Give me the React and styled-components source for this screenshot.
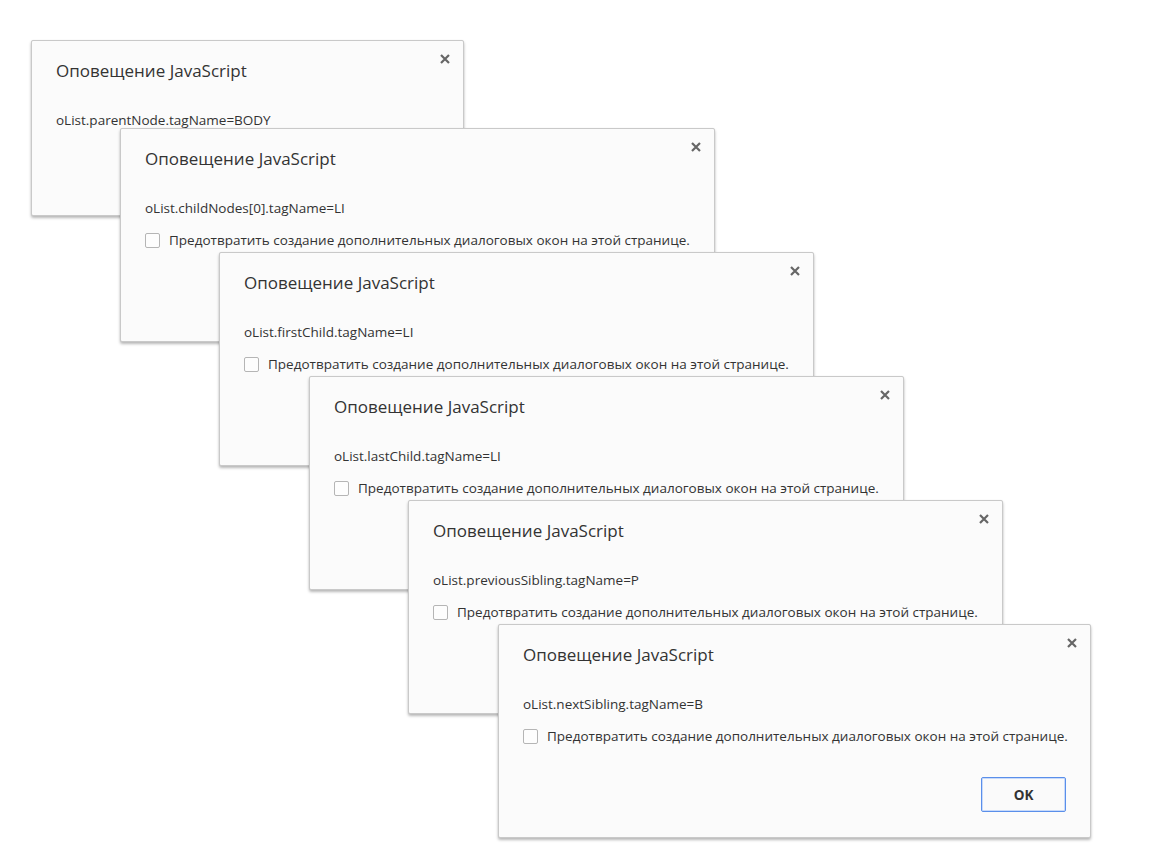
import styled, { createGlobalStyle } from 'styled-components';

const GlobalStyle = createGlobalStyle`
  html, body {
    margin: 0;
    padding: 0;
    background: #ffffff;
  }
  body {
    font-family: "Open Sans", "Noto Sans", "Liberation Sans", sans-serif;
  }
`;

const PREVENT_TEXT =
  'Предотвратить создание дополнительных диалоговых окон на этой странице.';

const alerts = [
  { x: 31, y: 40, width: 433, message: 'oList.parentNode.tagName=BODY', prevent: false },
  { x: 120, y: 128, width: 595, message: 'oList.childNodes[0].tagName=LI', prevent: true },
  { x: 219, y: 252, width: 595, message: 'oList.firstChild.tagName=LI', prevent: true },
  { x: 309, y: 376, width: 595, message: 'oList.lastChild.tagName=LI', prevent: true },
  { x: 408, y: 500, width: 595, message: 'oList.previousSibling.tagName=P', prevent: true },
  { x: 498, y: 624, width: 593, message: 'oList.nextSibling.tagName=B', prevent: true },
];

const Desktop = styled.div`
  position: relative;
  width: 1150px;
  height: 864px;
  overflow: hidden;
  background: #ffffff;
`;

// each alert is a window placed on the desktop
const Dialog = styled.div`
  position: absolute;
  box-sizing: border-box;
  display: flex;
  flex-direction: column;
  padding: 19px 24px 25px 24px;
  background: #fbfbfb;
  border: 1px solid #c9c9c9;
  border-radius: 2px;
  box-shadow: 0 2px 3px rgba(0, 0, 0, 0.28), 0 0 1px rgba(0, 0, 0, 0.08);
`;

const Title = styled.h1`
  margin: 0;
  font-size: 17px;
  font-weight: 400;
  line-height: 22px;
  color: #333333;
`;

const CloseBtn = styled.span`
  position: absolute;
  top: 11px;
  right: 11px;
  width: 14px;
  height: 14px;
  display: flex;
  align-items: center;
  justify-content: center;
`;

const Message = styled.p`
  margin: 29px 0 0 0;
  font-size: 13.5px;
  line-height: 18px;
  color: #333333;
`;

const CheckRow = styled.label`
  display: flex;
  align-items: center;
  gap: 9px;
  margin-top: 14px;
  font-size: 13.5px;
  line-height: 18px;
  color: #333333;
  white-space: nowrap;
`;

const Box = styled.span`
  box-sizing: border-box;
  width: 15px;
  height: 15px;
  border: 1px solid #b5b5b5;
  border-radius: 2px;
  background: #fdfdfd;
  flex: none;
`;

const Footer = styled.div`
  display: flex;
  justify-content: flex-end;
  margin-top: ${(p) => (p.$prevent ? '32px' : '26px')};
`;

const OkButton = styled.button`
  box-sizing: border-box;
  width: 85px;
  height: 35px;
  border: 1px solid #5a8fea;
  border-radius: 2px;
  background: #fafafa;
  font-family: inherit;
  font-size: 13.5px;
  font-weight: 700;
  color: #333333;
  box-shadow: inset 0 0 0 1px #c8dafa;
  cursor: pointer;
`;

const CloseIcon = () => (
  <svg width="10" height="10" viewBox="0 0 10 10">
    <path d="M1 1 L9 9 M9 1 L1 9" stroke="#666666" strokeWidth="2.2" strokeLinecap="butt" />
  </svg>
);

const Alert = ({ x, y, width, message, prevent }) => (
  <Dialog style={{ left: x, top: y, width }}>
    <CloseBtn>
      <CloseIcon />
    </CloseBtn>
    <Title>Оповещение JavaScript</Title>
    <Message>{message}</Message>
    {prevent && (
      <CheckRow>
        <Box />
        {PREVENT_TEXT}
      </CheckRow>
    )}
    <Footer $prevent={prevent}>
      <OkButton>OK</OkButton>
    </Footer>
  </Dialog>
);

const App = () => (
  <>
    <GlobalStyle />
    <Desktop>
      {alerts.map((a) => (
        <Alert key={a.message} {...a} />
      ))}
    </Desktop>
  </>
);

export default App;
